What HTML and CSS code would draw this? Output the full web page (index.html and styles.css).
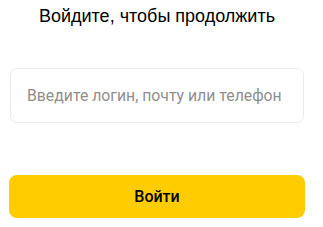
FILE: index.html
```html
<!DOCTYPE html>
<html lang="ru">
<head>
    <meta charset="UTF-8">
    <meta name="viewport" content="width=device-width, initial-scale=1.0">
    <title>Вход</title>
    <link rel="stylesheet" href="styles.css">
</head>
<body>
    <div class="auth-form">
        <h1 class="auth-title">Войдите, чтобы продолжить</h1>
        <div class="field">
            <input class="field-input" type="text" placeholder="Введите логин, почту или телефон">
        </div>
        <button class="submit-button">Войти</button>
    </div>
</body>
</html>
```

FILE: styles.css
```css
body {
    margin: 0;
    background: #fff;
    font-family: 'Roboto', 'Noto Sans', sans-serif;
}
.auth-form {
    width: 296px;
    margin-left: 9px;
    display: flex;
    flex-direction: column;
}
.auth-title {
    margin: 5px 0 0;
    font-family: 'Liberation Sans', Arial, sans-serif;
    font-size: 18px;
    font-weight: 400;
    line-height: 22px;
    text-align: center;
    color: #000;
}
.field {
    margin-top: 41px;
    padding: 0 1px;
}
.field-input {
    box-sizing: border-box;
    width: 100%;
    height: 55px;
    padding: 0 16px;
    border: 1px solid #ebebeb;
    border-radius: 7px;
    font-family: inherit;
    font-size: 15.8px;
    color: #000;
    outline: none;
}
.field-input::placeholder {
    color: #8f8f8f;
}
.submit-button {
    margin-top: 52px;
    height: 43px;
    border: none;
    border-radius: 8px;
    background: #ffcc00;
    color: #000;
    font-family: inherit;
    font-size: 16px;
    font-weight: 500;
    cursor: pointer;
}
```
